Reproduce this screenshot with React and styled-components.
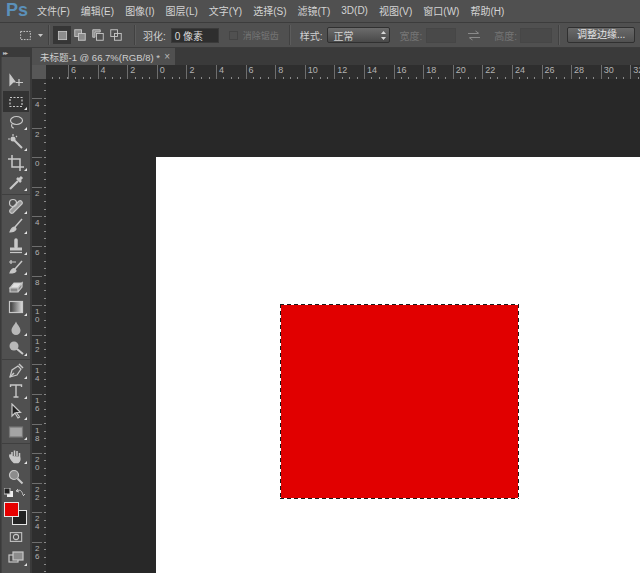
import React from 'react'
import styled, { createGlobalStyle } from 'styled-components'

const GlobalStyle = createGlobalStyle`
    html, body {
        background: #282828;
        height: 100%;
        margin: 0;
        overflow: hidden;
    }
    #root {
        height: 100%;
    }
`

const Shell = styled.div`
    color: #d2d2d2;
    display: flex;
    flex-direction: column;
    font-family: "Liberation Sans", "Noto Sans CJK SC", sans-serif;
    height: 573px;
    overflow: hidden;
    width: 640px;
`

const MenuBar = styled.div`
    align-items: center;
    background: #505050;
    box-sizing: border-box;
    display: flex;
    flex-shrink: 0;
    font-size: 10px;
    gap: 11px;
    height: 22px;
    padding: 0 0 2px 6px;
`

const Logo = styled.div`
    color: #5b90ba;
    font-family: "Liberation Sans", sans-serif;
    font-size: 18px;
    font-weight: 700;
    margin-right: 2px;
    width: 18px;
`

const MenuItem = styled.span`
    color: #d4d4d4;
    white-space: nowrap;
`

const OptionsBar = styled.div`
    align-items: center;
    background: #505050;
    border-bottom: 1px solid #3c3c3c;
    border-top: 1px solid #3c3c3c;
    display: flex;
    flex-shrink: 0;
    font-size: 10px;
    height: 24px;
    padding-left: 19px;
`

const Divider = styled.div`
    background: #414141;
    border-right: 1px solid #5c5c5c;
    flex-shrink: 0;
    height: 20px;
    margin: 0 ${props => props.$right}px 0 ${props => props.$left}px;
    width: 1px;
`

const ModeButton = styled.div`
    align-items: center;
    background: ${props => props.$active ? '#363636' : 'transparent'};
    display: flex;
    height: 18px;
    justify-content: center;
    width: 18px;
`

const OptionLabel = styled.span`
    color: ${props => props.$dim ? '#767676' : '#d0d0d0'};
    font-size: ${props => props.$size || 10}px;
    margin-left: ${props => props.$left || 0}px;
    white-space: nowrap;
`

const Field = styled.div`
    align-items: center;
    background: ${props => props.$disabled ? '#494949' : '#2e2e2e'};
    border: 1px solid ${props => props.$disabled ? '#464646' : '#3a3a3a'};
    box-sizing: border-box;
    color: #dadada;
    display: flex;
    font-size: 10px;
    height: 15px;
    margin-left: ${props => props.$left || 0}px;
    padding-left: 3px;
    width: ${props => props.$width}px;
`

const CheckBox = styled.div`
    background: #505050;
    border: 1px solid #444444;
    box-sizing: border-box;
    height: 9px;
    margin-left: 10px;
    width: 9px;
`

const Select = styled.div`
    align-items: center;
    background: linear-gradient(#6c6c6c, #494949);
    border: 1px solid #303030;
    border-radius: 2px;
    box-sizing: border-box;
    display: flex;
    font-size: 10px;
    height: 16px;
    justify-content: space-between;
    margin-left: 4px;
    padding: 0 3px 0 6px;
    width: 63px;
`

const RefineButton = styled.div`
    background: linear-gradient(#6a6a6a, #505050);
    border: 1px solid #303030;
    border-radius: 2px;
    box-sizing: border-box;
    color: #e2e2e2;
    font-size: 10px;
    height: 16px;
    line-height: 13px;
    text-align: center;
    width: 68px;
`

const Main = styled.div`
    display: flex;
    flex: 1;
    min-height: 0;
`

const ToolPanel = styled.div`
    background: #3a3a3a;
    display: flex;
    flex-direction: column;
    flex-shrink: 0;
    width: 32px;
`

const ToolPanelHeader = styled.div`
    color: #bdbdbd;
    font-family: "DejaVu Sans", sans-serif;
    font-size: 6px;
    height: 9px;
    letter-spacing: -1px;
    line-height: 9px;
    padding-left: 3px;
`

const ToolColumn = styled.div`
    background: #505050;
    border-left: 1px solid #434343;
    display: flex;
    flex: 1;
    flex-direction: column;
    margin: 0 2px 0 1px;
    padding-top: 14px;
`

const ToolGroup = styled.div`
    border-bottom: ${props => props.$last ? 'none' : '1px solid #3f3f3f'};
    display: flex;
    flex-direction: column;
    padding-bottom: ${props => props.$last ? 0 : 1}px;
    margin-top: ${props => props.$last ? 2 : 0}px;
`

const ToolButton = styled.div`
    align-items: center;
    background: ${props => props.$active ? '#333333' : 'transparent'};
    display: flex;
    height: 20.4px;
    justify-content: center;
    margin: 0 1px;
    position: relative;
    &::after {
        border-bottom: 3px solid #e4e4e4;
        border-left: 3px solid transparent;
        bottom: 2px;
        content: ${props => props.$more ? '""' : 'none'};
        position: absolute;
        right: 2px;
    }
`

const ColorArea = styled.div`
    height: 39px;
    padding-top: 1px;
    position: relative;
`

const ResetRow = styled.div`
    align-items: center;
    display: flex;
    height: 10px;
    justify-content: space-between;
    padding: 0 5px 0 2px;
`

const Swatch = styled.div`
    background: ${props => props.$color};
    border: 1px solid #e6e6e6;
    box-sizing: border-box;
    height: 15px;
    left: ${props => props.$left}px;
    position: absolute;
    top: ${props => props.$top}px;
    width: 15px;
    z-index: ${props => props.$front ? 2 : 1};
`

const DocArea = styled.div`
    display: flex;
    flex: 1;
    flex-direction: column;
    min-width: 0;
`

const TabRow = styled.div`
    background: #3a3a3a;
    display: flex;
    flex-shrink: 0;
    height: 17px;
`

const Tab = styled.div`
    align-items: center;
    background: #505050;
    box-sizing: border-box;
    color: #cfcfcf;
    display: flex;
    font-size: 9.5px;
    justify-content: space-between;
    padding: 0 5px 0 8px;
    white-space: nowrap;
    width: 143px;
`

const TabClose = styled.span`
    color: #b8b8b8;
    font-size: 10px;
`

const TopRuler = styled.div`
    background-color: #2e2e2e;
    background-image: repeating-linear-gradient(90deg, #8a8a8a 0 1px, transparent 1px 7.4px);
    background-position: 36px 100%;
    background-repeat: repeat-x;
    background-size: 100% 2px;
    display: flex;
    flex-shrink: 0;
    height: 14px;
`

const RulerCorner = styled.div`
    background: #575757;
    flex-shrink: 0;
    margin-right: 22px;
    width: 14px;
`

const HTick = styled.div`
    border-left: 1px solid #6e6e6e;
    box-sizing: border-box;
    color: #b2b2b2;
    flex-shrink: 0;
    font-size: 9px;
    line-height: 11px;
    padding-left: 2px;
    width: 29.6px;
`

const WorkRow = styled.div`
    display: flex;
    flex: 1;
    min-height: 0;
`

const SideRuler = styled.div`
    background-color: #2e2e2e;
    background-image: repeating-linear-gradient(180deg, #8a8a8a 0 1px, transparent 1px 7.4px);
    background-position: 100% 4px;
    background-repeat: repeat-y;
    background-size: 2px 100%;
    flex-shrink: 0;
    padding-top: 19px;
    width: 14px;
`

const VTick = styled.div`
    border-top: 1px solid #6e6e6e;
    box-sizing: border-box;
    color: #b2b2b2;
    font-size: 8px;
    height: 29.6px;
    line-height: 8px;
    padding: 2px 0 0 3px;
    width: 10px;
`

const Workspace = styled.div`
    background: #282828;
    flex: 1;
    padding: 78px 0 0 110px;
`

const Page = styled.div`
    background: #ffffff;
    height: 420px;
    overflow: hidden;
    padding: 147px 0 0 124px;
`

const Selection = styled.div`
    background-color: #ffffff;
    background-image:
        repeating-linear-gradient(90deg, #1a1a1a 0 4px, transparent 4px 7px),
        repeating-linear-gradient(90deg, #1a1a1a 0 4px, transparent 4px 7px),
        repeating-linear-gradient(180deg, #1a1a1a 0 4px, transparent 4px 7px),
        repeating-linear-gradient(180deg, #1a1a1a 0 4px, transparent 4px 7px);
    background-position: 0 0, 0 100%, 0 0, 100% 0;
    background-repeat: no-repeat;
    background-size: 100% 1px, 100% 1px, 1px 100%, 1px 100%;
    box-sizing: border-box;
    height: 195px;
    padding: 1px;
    width: 239px;
`

const RedFill = styled.div`
    background: #e10000;
    height: 100%;
`

const MENU = ['文件(F)', '编辑(E)', '图像(I)', '图层(L)', '文字(Y)', '选择(S)', '滤镜(T)', '3D(D)', '视图(V)', '窗口(W)', '帮助(H)']
const TOP_LABELS = ['6', '4', '2', '0', '2', '4', '6', '8', '10', '12', '14', '16', '18', '20', '22', '24', '26', '28', '30', '32']
const SIDE_LABELS = ['4', '2', '0', '2', '4', '6', '8', '1 0', '1 2', '1 4', '1 6', '1 8', '2 0', '2 2', '2 4', '2 6']

// all tool icons share one 16x16 box
const Icon = ({ size = 16, children }) => (
    <svg width={size} height={size} viewBox="0 0 16 16" fill="none" stroke="#c8c8c8" strokeWidth="1.2">
        {children}
    </svg>
)

const TOOLS = [
    [
        { id: 'move', icon: <><path d="M2 2v10l3-3 2 0z" fill="#c8c8c8" /><path d="M11 6v7M8 9.500h7" /></> },
        { id: 'marquee', active: true, more: true, icon: <rect x="2" y="3.500" width="12" height="9" strokeDasharray="2 1.500" /> },
        { id: 'lasso', more: true, icon: <><ellipse cx="8.500" cy="6.500" rx="6" ry="4" /><path d="M4 10c-1 2 0 4 2 4" /></> },
        { id: 'wand', more: true, icon: <><path d="M6 6l8 8" strokeWidth="2" /><circle cx="5" cy="5" r="2.500" fill="#c8c8c8" stroke="none" /><path d="M5 0v2M0 5h2M9 2l-1 1" /></> },
        { id: 'crop', more: true, icon: <path d="M4 0v12h12M0 4h12v12" strokeWidth="1.500" /> },
        { id: 'dropper', more: true, icon: <><path d="M2 14l8-8" strokeWidth="2.200" /><path d="M9 3l4 4" strokeWidth="2.500" /><path d="M11 5l3-3" strokeWidth="3" /></> },
    ],
    [
        { id: 'heal', more: true, icon: <><path d="M2 12l9-9c2-1 4 1 3 3l-9 9c-2 1-4-1-3-3z" fill="#9a9a9a" /><circle cx="5" cy="5" r="3.500" /></> },
        { id: 'brush', more: true, icon: <><path d="M7 9l7-8" strokeWidth="1.500" /><path d="M2 14c1-3 3-5 5-5l1 2c-1 2-3 3-6 3z" fill="#c8c8c8" /></> },
        { id: 'stamp', more: true, icon: <><path d="M8 2v7" strokeWidth="3.500" strokeLinecap="round" /><path d="M2 11h12" strokeWidth="3" /><path d="M2 14.500h12" /></> },
        { id: 'history', more: true, icon: <><path d="M1 3h7M3 1v4" /><path d="M7 10l7-8" strokeWidth="1.500" /><path d="M2 14c1-3 3-5 5-4l1 2c-1 2-3 2-6 2z" fill="#c8c8c8" /></> },
        { id: 'eraser', more: true, icon: <><path d="M6 4h8l-4 5H2z" fill="#e2e2e2" /><path d="M2 9h8v4H2zM10 9l4-5v4l-4 5" fill="#8a8a8a" /></> },
        { id: 'gradient', more: true, icon: <><defs><linearGradient id="ramp"><stop offset="0" stopColor="#333" /><stop offset="1" stopColor="#ddd" /></linearGradient></defs><rect x="1.500" y="2.500" width="13" height="11" fill="url(#ramp)" /></> },
        { id: 'blur', more: true, icon: <path d="M8 1.500c1 3 4.500 5.500 4.500 9a4.500 4.500 0 0 1-9 0c0-3.500 3.500-6 4.500-9z" fill="#b8b8b8" stroke="none" /> },
        { id: 'dodge', more: true, icon: <><circle cx="6" cy="6" r="4.500" fill="#b8b8b8" stroke="none" /><path d="M9 9l6 5" strokeWidth="2" /></> },
    ],
    [
        { id: 'pen', more: true, icon: <><path d="M2 14l2-7 6-4 3 3-4 6z" fill="#555" /><path d="M2 14l4-4M11 1l4 4" strokeWidth="1.500" /></> },
        { id: 'type', more: true, icon: <path d="M2.500 4V2h11v2M8 2v12M5.500 14h5" strokeWidth="1.400" /> },
        { id: 'path', more: true, icon: <path d="M4 1v12l3-3 3 5 1.500-1-3-4.500h4z" fill="#222" /> },
        { id: 'shape', more: true, icon: <rect x="1.500" y="3" width="13" height="10" fill="#a4a4a4" stroke="#777" /> },
    ],
]

const Tool = ({ tool }) => (
    <ToolButton $active={tool.active} $more={tool.more}>
        <Icon>{tool.icon}</Icon>
    </ToolButton>
)

const App = () => {
    return <Shell>
        <GlobalStyle />

        <MenuBar>
            <Logo>Ps</Logo>
            {MENU.map(item => <MenuItem key={item}>{item}</MenuItem>)}
        </MenuBar>

        <OptionsBar>
            <Icon size={13}><rect x="2" y="3" width="12" height="10" strokeDasharray="2 1.500" /></Icon>
            <svg width="5" height="3" style={{ margin: '0 0 0 6px' }}><path d="M0 0h5L2.500 3z" fill="#c8c8c8" /></svg>
            <Divider $left={5} $right={3} />
            <ModeButton $active><Icon size={11}><rect x="2" y="2" width="12" height="12" fill="#8c8c8c" /></Icon></ModeButton>
            <ModeButton><Icon size={12}><rect x="1" y="1" width="9" height="9" fill="#8c8c8c" /><rect x="6" y="6" width="9" height="9" fill="#8c8c8c" /></Icon></ModeButton>
            <ModeButton><Icon size={12}><path d="M1 1h10v3H4v7H1z" fill="#8c8c8c" /><rect x="6" y="6" width="9" height="9" /></Icon></ModeButton>
            <ModeButton><Icon size={12}><rect x="1" y="1" width="9" height="9" /><rect x="6" y="6" width="9" height="9" /></Icon></ModeButton>
            <Divider $left={9} $right={7} />
            <OptionLabel>羽化:</OptionLabel>
            <Field $width={48} $left={5}>0 像素</Field>
            <CheckBox />
            <OptionLabel $dim $size={9} $left={5}>消除锯齿</OptionLabel>
            <Divider $left={10} $right={9} />
            <OptionLabel>样式:</OptionLabel>
            <Select>
                正常
                <svg width="5" height="9" viewBox="0 0 5 9"><path d="M2.500 0L5 3H0zM2.500 9L0 6h5z" fill="#d8d8d8" /></svg>
            </Select>
            <OptionLabel $dim $left={10}>宽度:</OptionLabel>
            <Field $disabled $width={30} $left={4} />
            <svg width="12" height="11" viewBox="0 0 12 11" style={{ margin: '0 14px 0 12px' }} fill="none" stroke="#8a8a8a"><path d="M0 3.500h10M7.500 1L11 3.500M12 7.500H2M4.500 10L1 7.500" /></svg>
            <OptionLabel $dim>高度:</OptionLabel>
            <Field $disabled $width={32} $left={3} />
            <Divider $left={6} $right={7} />
            <RefineButton>调整边缘...</RefineButton>
        </OptionsBar>

        <Main>
            <ToolPanel>
                <ToolPanelHeader>▸▸</ToolPanelHeader>
                <ToolColumn>
                    {TOOLS.map((group, i) => (
                        <ToolGroup key={i}>
                            {group.map(tool => <Tool key={tool.id} tool={tool} />)}
                        </ToolGroup>
                    ))}
                    <ToolGroup $last>
                        <ToolButton $more>
                            <Icon><path d="M4 8V4M6.500 8V2.500M9 8V3M11.500 9V5M4 8L2 7c-1 1 2 6 4 7.500h4c2-1 2-4 1.500-6" fill="#c8c8c8" strokeWidth="1.500" /></Icon>
                        </ToolButton>
                        <ToolButton>
                            <Icon><circle cx="6" cy="6" r="4.500" fill="#8c8c8c" /><path d="M9.500 9.500l5 5" strokeWidth="2" /></Icon>
                        </ToolButton>
                        <ColorArea>
                            <ResetRow>
                                <svg width="9" height="9"><rect x="3" y="3" width="6" height="6" fill="#eee" /><rect x="0" y="0" width="6" height="6" fill="#222" stroke="#ccc" /></svg>
                                <svg width="9" height="9" fill="none" stroke="#c8c8c8"><path d="M1 3c3-2 5 0 6 4M0 3l2-2M0 3l3 1M7 8l2-2" /></svg>
                            </ResetRow>
                            <Swatch $color="#e60000" $left={2} $top={15} $front />
                            <Swatch $color="#232323" $left={10} $top={23} />
                        </ColorArea>
                        <ToolButton>
                            <Icon size={14}><rect x="1.500" y="3" width="13" height="10" /><circle cx="8" cy="8" r="3" /></Icon>
                        </ToolButton>
                        <ToolButton $more>
                            <Icon><rect x="1" y="6" width="9" height="7" /><rect x="5" y="3" width="10" height="8" fill="#8c8c8c" /></Icon>
                        </ToolButton>
                    </ToolGroup>
                </ToolColumn>
            </ToolPanel>

            <DocArea>
                <TabRow>
                    <Tab>未标题-1 @ 66.7%(RGB/8) * <TabClose>×</TabClose></Tab>
                </TabRow>
                <TopRuler>
                    <RulerCorner />
                    {TOP_LABELS.map((label, i) => <HTick key={i}>{label}</HTick>)}
                </TopRuler>
                <WorkRow>
                    <SideRuler>
                        {SIDE_LABELS.map((label, i) => (
                            <VTick key={i}>
                                {label.split(' ').map((digit, j) => <div key={j}>{digit}</div>)}
                            </VTick>
                        ))}
                    </SideRuler>
                    <Workspace>
                        <Page>
                            <Selection>
                                <RedFill />
                            </Selection>
                        </Page>
                    </Workspace>
                </WorkRow>
            </DocArea>
        </Main>
    </Shell>
}

export default App
